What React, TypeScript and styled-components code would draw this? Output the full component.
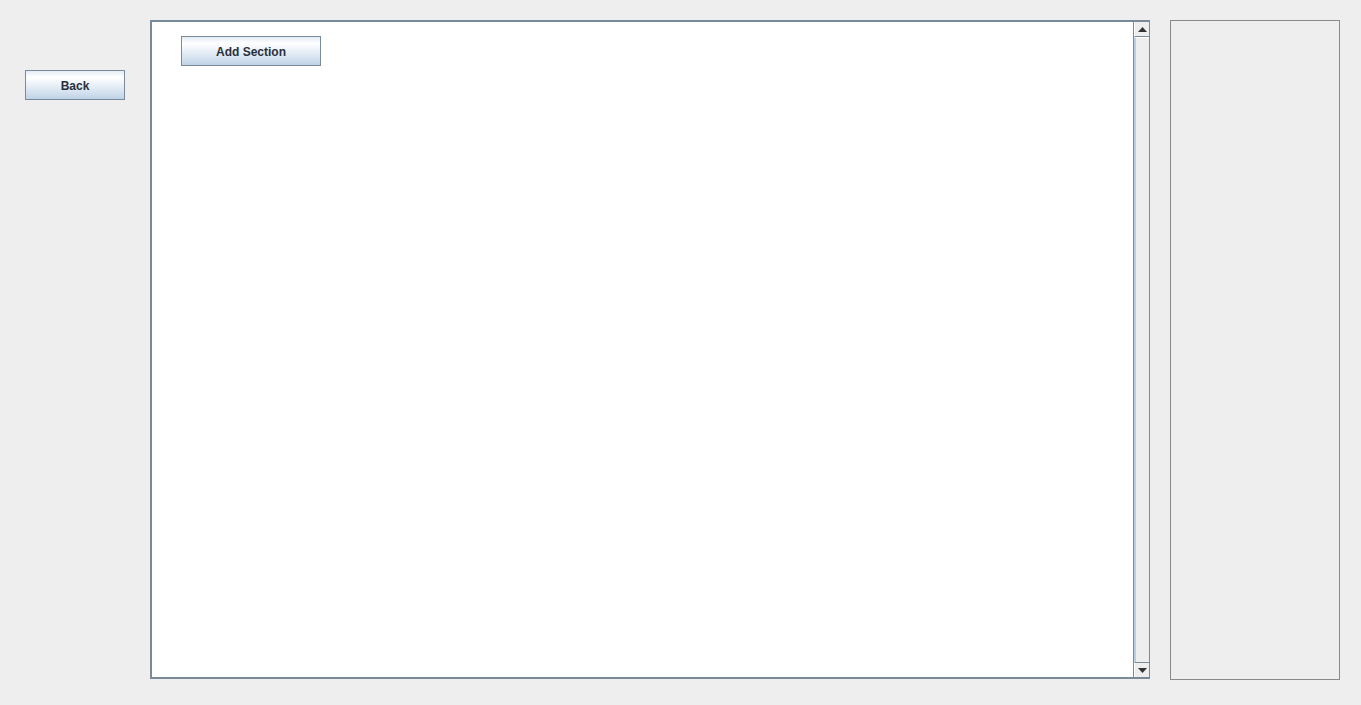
import React from "react";
import styled, { createGlobalStyle } from "styled-components";

const GlobalStyle = createGlobalStyle`
  html, body {
    margin: 0;
    padding: 0;
    background: #eeeeee;
    font-family: "Liberation Sans", Arial, sans-serif;
  }
`;

const Frame = styled.div`
  width: 1361px;
  height: 705px;
  display: flex;
  flex-direction: row;
  align-items: flex-start;
  background: #eeeeee;
  box-sizing: border-box;
  padding-top: 20px;
`;

const LeftColumn = styled.div`
  width: 150px;
  flex-shrink: 0;
  display: flex;
  flex-direction: column;
  padding: 50px 0 0 25px;
  box-sizing: border-box;
`;

const MetalButton = styled.button<{ $w: number }>`
  width: ${(p) => p.$w}px;
  height: 30px;
  box-sizing: border-box;
  border: 1px solid #7a8a99;
  border-radius: 0;
  padding: 2px 0 0 0;
  margin: 0;
  background: linear-gradient(
    to bottom,
    #e3ecf6 0%,
    #ffffff 22%,
    #eef3f9 45%,
    #d5e2ef 75%,
    #bfd2e6 100%
  );
  font-family: "Liberation Sans", Arial, sans-serif;
  font-weight: bold;
  font-size: 12px;
  color: #2a2f3d;
  cursor: pointer;
`;

const ScrollPane = styled.div`
  width: 1000px;
  height: 659px;
  flex-shrink: 0;
  box-sizing: border-box;
  border: 2px solid #7a8a99;
  border-right: 1px solid #7a8a99;
  display: flex;
  flex-direction: row;
  background: #ffffff;
`;

const Viewport = styled.div`
  flex: 1;
  background: #ffffff;
  padding: 14px 0 0 29px;
  box-sizing: border-box;
  border-right: 1px solid #7a8a99;
`;

const ScrollBar = styled.div`
  width: 15px;
  display: flex;
  flex-direction: column;
  background: #eeeeee;
`;

const ArrowButton = styled.div`
  height: 15px;
  display: flex;
  align-items: center;
  justify-content: center;
  box-sizing: border-box;
  border-left: 1px solid #ffffff;
  background: #eeeeee;
`;

const UpArrow = styled(ArrowButton)`
  border-bottom: 1px solid #7a8a99;
`;

const DownArrow = styled(ArrowButton)`
  border-top: 1px solid #7a8a99;
`;

const Track = styled.div`
  flex: 1;
  background: #eeeeee;
  border-left: 2px solid #b8cfe5;
  border-top: 1px solid #ffffff;
`;

const SidePanel = styled.div`
  width: 170px;
  height: 660px;
  margin-left: 20px;
  flex-shrink: 0;
  box-sizing: border-box;
  border: 1px solid #8a8a8a;
  background: #eeeeee;
`;

const Arrow = ({ up }: { up: boolean }) => (
  <svg width="9" height="5" viewBox="0 0 9 5">
    {up ? (
      <polygon points="0,5 9,5 4.5,0" fill="#333333" />
    ) : (
      <polygon points="0,0 9,0 4.5,5" fill="#333333" />
    )}
  </svg>
);

export default function App() {
  return (
    <>
      <GlobalStyle />
      <Frame>
        <LeftColumn>
          <MetalButton $w={100}>Back</MetalButton>
        </LeftColumn>
        <ScrollPane>
          <Viewport>
            <MetalButton $w={140}>Add Section</MetalButton>
          </Viewport>
          <ScrollBar>
            <UpArrow>
              <Arrow up />
            </UpArrow>
            <Track />
            <DownArrow>
              <Arrow up={false} />
            </DownArrow>
          </ScrollBar>
        </ScrollPane>
        <SidePanel />
      </Frame>
    </>
  );
}
